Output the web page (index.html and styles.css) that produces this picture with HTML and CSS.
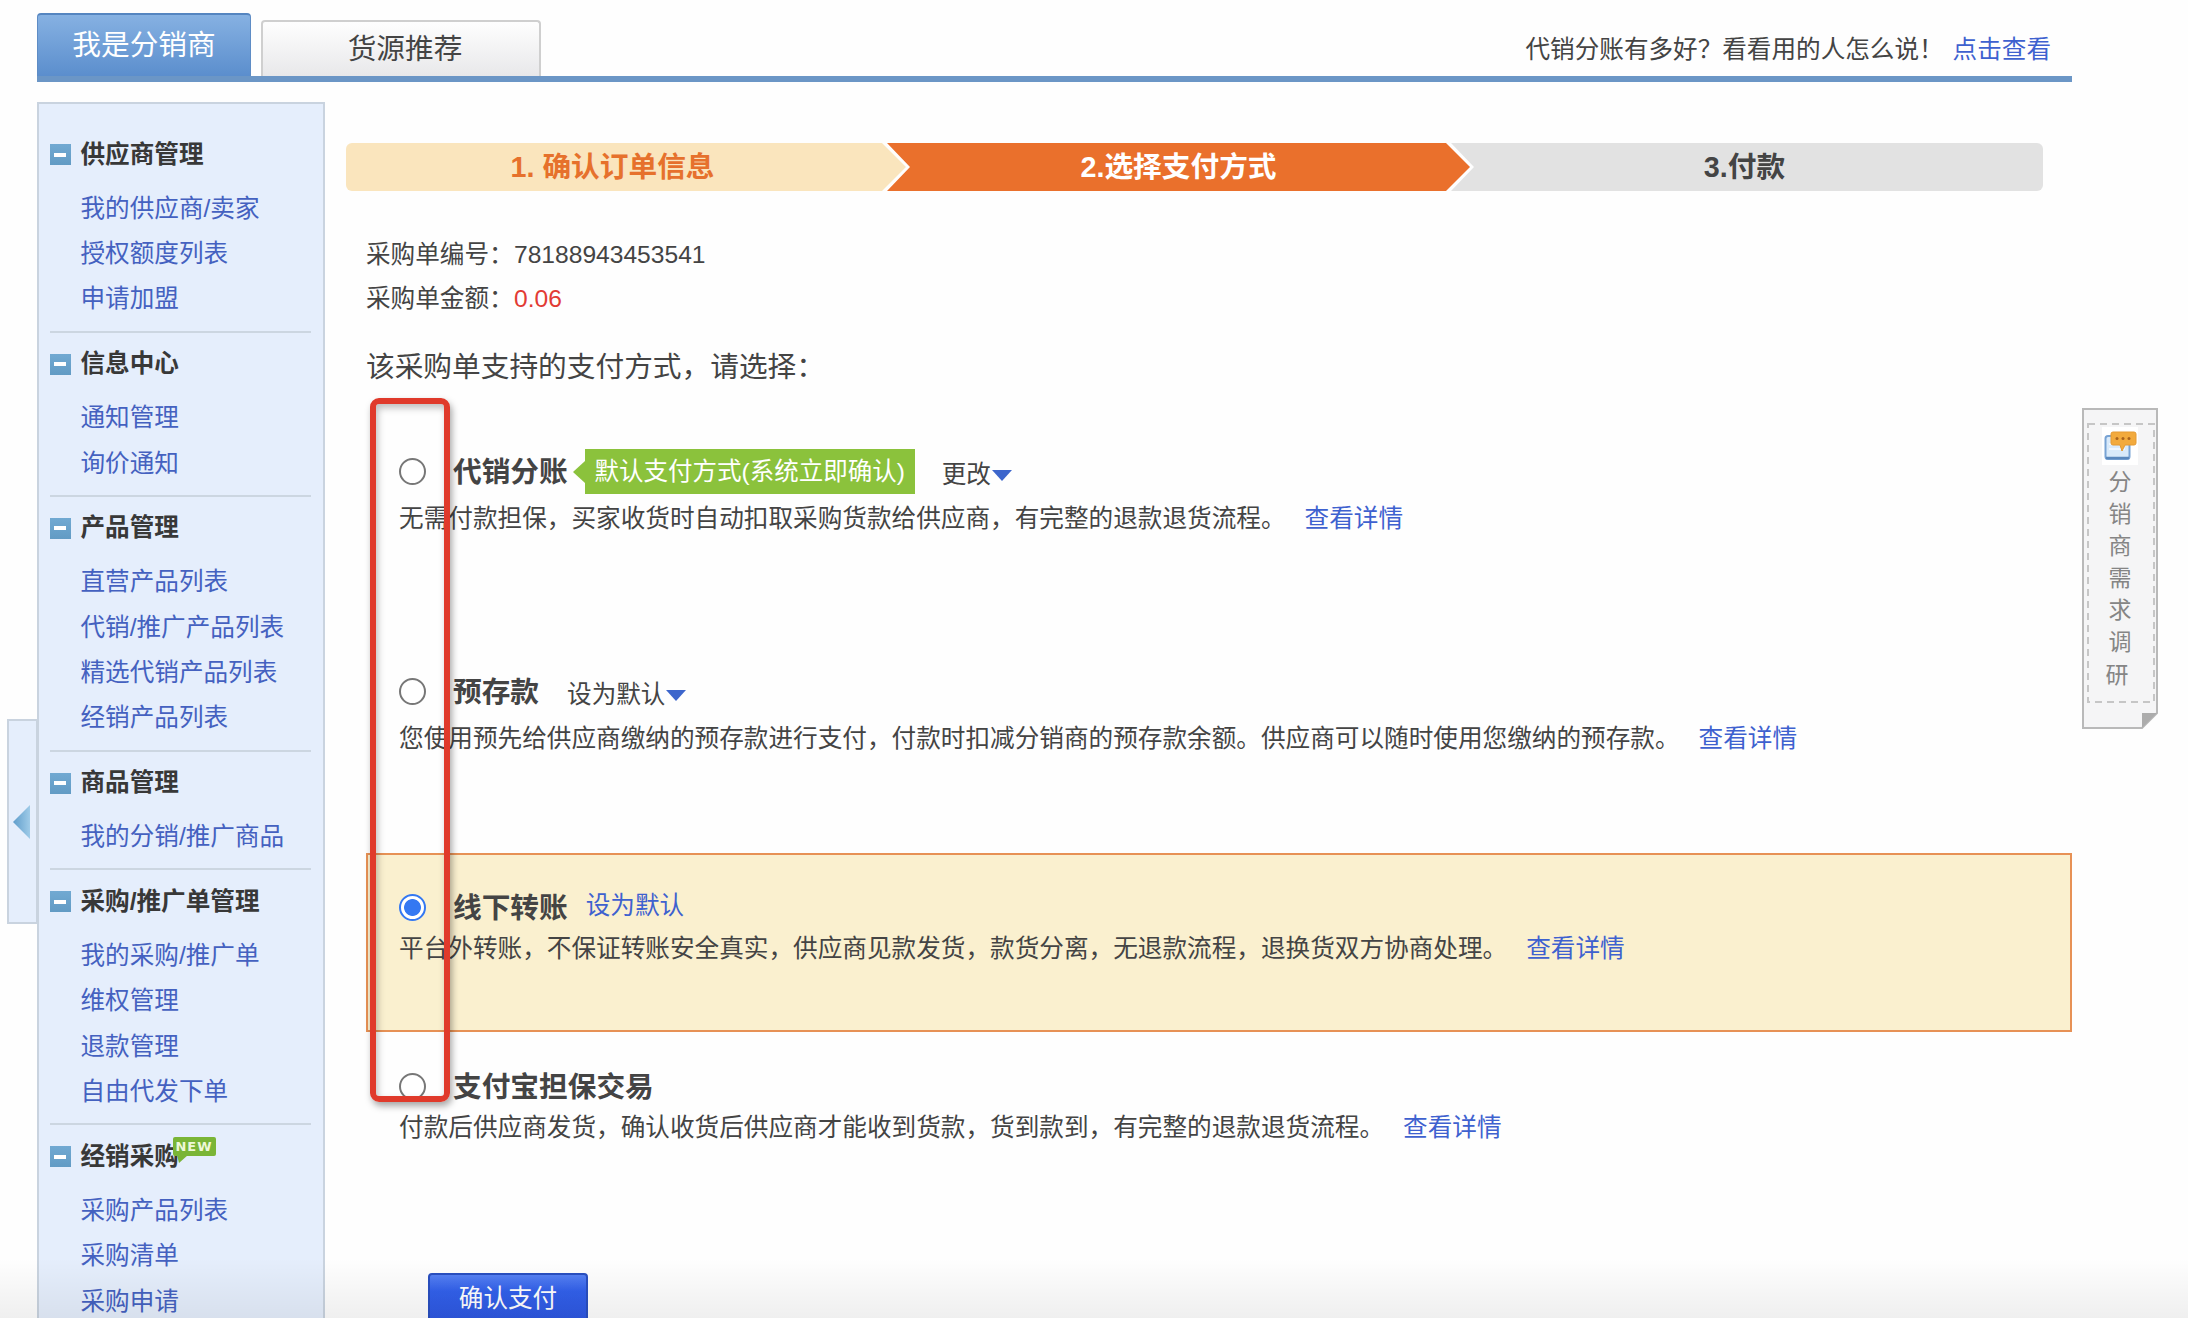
FILE: index.html
```html
<!DOCTYPE html>
<html lang="zh-CN">
<head>
<meta charset="utf-8">
<title>选择支付方式</title>
<link rel="stylesheet" href="styles.css">
</head>
<body>
<header class="topbar">
  <a class="tab tab-active">我是分销商</a>
  <a class="tab tab-plain">货源推荐</a>
  <p class="promo">代销分账有多好？看看用的人怎么说！<a class="link">点击查看</a></p>
</header>
<div class="layout">
  <nav class="sidebar">
    <section class="group">
      <h3 class="group-title"><i class="minus"></i>供应商管理</h3>
      <a class="item">我的供应商/卖家</a><a class="item">授权额度列表</a><a class="item">申请加盟</a>
    </section>
    <section class="group">
      <h3 class="group-title"><i class="minus"></i>信息中心</h3>
      <a class="item">通知管理</a><a class="item">询价通知</a>
    </section>
    <section class="group">
      <h3 class="group-title"><i class="minus"></i>产品管理</h3>
      <a class="item">直营产品列表</a><a class="item">代销/推广产品列表</a><a class="item">精选代销产品列表</a><a class="item">经销产品列表</a>
    </section>
    <section class="group">
      <h3 class="group-title"><i class="minus"></i>商品管理</h3>
      <a class="item">我的分销/推广商品</a>
    </section>
    <section class="group">
      <h3 class="group-title"><i class="minus"></i>采购/推广单管理</h3>
      <a class="item">我的采购/推广单</a><a class="item">维权管理</a><a class="item">退款管理</a><a class="item">自由代发下单</a>
    </section>
    <section class="group">
      <h3 class="group-title"><i class="minus"></i>经销采购<span class="new">NEW</span></h3>
      <a class="item">采购产品列表</a><a class="item">采购清单</a><a class="item">采购申请</a>
    </section>
  </nav>
  <main class="main">
    <ol class="steps">
      <li class="step step-done">1. 确认订单信息</li>
      <li class="step step-current">2.选择支付方式</li>
      <li class="step step-next">3.付款</li>
    </ol>
    <div class="order">
      <p class="line"><span class="label">采购单编号：</span>78188943453541</p>
      <p class="line"><span class="label">采购单金额：</span><span class="amount">0.06</span></p>
      <p class="prompt">该采购单支持的支付方式，请选择：</p>
    </div>
    <form class="options">
      <section class="option option-first">
        <div class="head"><i class="radio"></i><b class="name">代销分账</b><span class="flag">默认支付方式(系统立即确认)</span><a class="change">更改<i class="caret"></i></a></div>
        <p class="desc">无需付款担保，买家收货时自动扣取采购货款给供应商，有完整的退款退货流程。<a class="link">查看详情</a></p>
      </section>
      <section class="option option-second">
        <div class="head"><i class="radio"></i><b class="name">预存款</b><a class="change change-near">设为默认<i class="caret"></i></a></div>
        <p class="desc">您使用预先给供应商缴纳的预存款进行支付，付款时扣减分销商的预存款余额。供应商可以随时使用您缴纳的预存款。<a class="link">查看详情</a></p>
      </section>
      <section class="option option-selected">
        <div class="head"><i class="radio radio-on"></i><b class="name">线下转账</b><a class="set-default">设为默认</a></div>
        <p class="desc">平台外转账，不保证转账安全真实，供应商见款发货，款货分离，无退款流程，退换货双方协商处理。<a class="link">查看详情</a></p>
      </section>
      <section class="option option-last">
        <div class="head"><i class="radio"></i><b class="name">支付宝担保交易</b></div>
        <p class="desc">付款后供应商发货，确认收货后供应商才能收到货款，货到款到，有完整的退款退货流程。<a class="link">查看详情</a></p>
      </section>
      <a class="pay">确认支付</a>
    </form>
  </main>
</div>
<div class="handle"><svg width="17" height="34" viewBox="0 0 17 34"><defs><linearGradient id="hg"><stop offset="0" stop-color="#5f9dcb"/><stop offset="1" stop-color="#9fcbe8"/></linearGradient></defs><path d="M0 17 17 0V34Z" fill="url(#hg)"/></svg></div>
<aside class="survey">
  <svg class="paper" width="76" height="321" viewBox="0 0 76 321" fill="none"><path d="M1 1H75V305L60 320H1Z" fill="#f5f5f6" stroke="#b9b9b9" stroke-width="2"/><path d="M60 305H75L60 320Z" fill="#acacac"/><rect x="6" y="16" width="66" height="278" stroke="#c6c6c6" stroke-width="2" stroke-dasharray="7 5"/></svg>
  <svg class="survey-icon" width="36" height="38" viewBox="0 0 36 38"><path fill="#fff" d="M0 0h36v38H0z"/><rect x="3.500" y="9" width="24" height="23" rx="2.500" fill="#d9eafa" stroke="#78a3d4" stroke-width="2"/><path d="M4 31H27" stroke="#5a88bd" stroke-width="2.500"/><path d="M7 17H23M7 22H23" stroke="#eff7ff" stroke-width="2"/><path d="M11 5H32Q34 5 34 7V16Q34 18 32 18H23L20 24L18 18H11Q9 18 9 16V7Q9 5 11 5Z" fill="#f2aa3d" stroke="#e59a32"/><g fill="#a9631c"><circle cx="15" cy="11.500" r="1.500"/><circle cx="21" cy="11.500" r="1.500"/><circle cx="27" cy="11.500" r="1.500"/></g></svg>
  <span>分</span><span>销</span><span>商</span><span>需</span><span>求</span><span>调</span><span class="shift">研</span>
</aside>
<div class="marker"></div>
<div class="shade"></div>
</body>
</html>
```
FILE: styles.css
```css
* { box-sizing: border-box; }
html { overflow: hidden; }
body {
  position: relative;
  margin: 0;
  height: 1318px;
  overflow: hidden;
  background: #fefefe;
  color: #444;
  font: 24.6px/44px "Liberation Sans", "Noto Sans CJK SC", sans-serif;
}
p, h3, ol { margin: 0; padding: 0; }
a, p, h3, li, b, span { white-space: nowrap; }
i { display: block; flex: none; }
.link { color: #3e61cf; }

.topbar {
  display: flex;
  align-items: flex-end;
  margin-left: 37px;
  width: 2035px;
  height: 82px;
  border-bottom: 6px solid #6b96c6;
}
.tab { font-size: 28.7px; text-align: center; }
.tab-active {
  width: 214px;
  height: 63px;
  line-height: 61px;
  color: #fff;
  border: 1px solid #5e8cc5;
  border-top: 2px solid #5585c0;
  border-bottom: 0;
  border-radius: 4px 4px 0 0;
  background: linear-gradient(#86b1e2, #5b8ecd);
}
.tab-plain {
  width: 280px;
  height: 56px;
  margin-left: 10px;
  padding-left: 8px;
  line-height: 55px;
  border: 2px solid #cfcfcf;
  border-bottom: 0;
  border-radius: 4px 4px 0 0;
  background: linear-gradient(#fefefe, #e8e8ea);
}
.promo { margin: 0 21px 4px auto; }
.promo .link { margin-left: 9px; }

.layout { display: flex; align-items: flex-start; margin-left: 37px; width: 2035px; }
.sidebar {
  flex: none;
  width: 288px;
  height: 1230px;
  margin-top: 20px;
  padding: 19px 12px 0 10.500px;
  border: 2px solid #c9d3df;
  background: #e5eefc;
}
.group {
  padding: 9px 0 8.700px;
  border-bottom: 2px solid #ccd6e1;
}
.group-title {
  display: flex;
  align-items: center;
  position: relative;
  height: 45px;
  margin-bottom: 8.600px;
  color: #383838;
  font-size: 24.600px;
}
.minus {
  width: 21px;
  height: 21px;
  margin-right: 10px;
  background: linear-gradient(#fff, #fff) 50% 50% / 12px 4px no-repeat, linear-gradient(#71a9d2, #629bc4);
}
.item { display: block; padding-left: 31px; color: #4461c0; line-height: 45.400px; }
.new {
  position: absolute;
  left: 123px;
  top: 3px;
  width: 43px;
  height: 19px;
  border-radius: 2px;
  background: #7ab536;
  color: #eef8d8;
  font: bold 13px/19px "DejaVu Sans", sans-serif;
  text-align: center;
  letter-spacing: 1px;
}
.new::after {
  content: "";
  position: absolute;
  left: 4px;
  top: 18px;
  border: solid transparent;
  border-width: 8px 9px 0 2px;
  border-top-color: #7ab536;
}

.main { flex: 1; padding: 61px 0 0 21px; }
.steps { display: flex; width: 1697px; height: 48px; list-style: none; }
.step { font-weight: bold; font-size: 28.7px; line-height: 49px; text-align: center; }
.step-done {
  width: 560px;
  padding-right: 27px;
  color: #e6712c;
  border-radius: 6px 0 0 6px;
  background: #fae5bd;
  clip-path: polygon(0 0, 536px 0, 560px 50%, 536px 100%, 0 100%);
}
.step-current {
  width: 583px;
  margin-left: -19px;
  color: #fff;
  background: #ea702c;
  clip-path: polygon(0 0, 559px 0, 583px 50%, 559px 100%, 0 100%, 23px 50%);
}
.step-next {
  flex: 1;
  margin-left: -19px;
  padding-right: 5px;
  color: #444;
  border-radius: 0 6px 6px 0;
  background: #e2e2e2;
  clip-path: polygon(0 0, 100% 0, 100% 100%, 0 100%, 23px 50%);
}
.order { padding: 42px 0 0 20px; }
.line { display: flex; }
.label { width: 148px; }
.amount { color: #e23b34; }
.prompt { margin-top: 24px; font-size: 28.7px; }

.options { margin-left: 20px; }
.option { padding-left: 33px; border: 0 solid #e79155; }
.option-first { height: 220px; padding-top: 57px; }
.option-second { height: 244px; padding-top: 57px; }
.option-selected { height: 179px; padding: 33px 0 0 31px; border-width: 2px; background: #faf0cf; }
.option-last { height: 241px; padding-top: 35px; }
.head { display: flex; align-items: center; height: 39px; }
.option-first .head, .option-second .head { height: 51px; }
.radio {
  width: 27px;
  height: 27px;
  margin-right: 27px;
  border: 2px solid #777;
  border-radius: 50%;
  background: #fff;
}
.radio-on {
  border-color: #3478f2;
  background: radial-gradient(circle, #3478f2 8px, #fff 8.800px);
}
.name { font-size: 28.7px; }
.flag {
  position: relative;
  height: 45px;
  margin-left: 17px;
  width: 330px;
  color: #fff;
  font-size: 24.500px;
  text-align: center;
  line-height: 46px;
  background: #8bc23c;
}
.flag::before {
  content: "";
  position: absolute;
  left: -12px;
  top: 12px;
  border: solid transparent;
  border-width: 11px 12px 11px 0;
  border-right-color: #8bc23c;
}
.change { display: flex; align-items: center; margin: 7px 0 0 27px; }
.change-near { margin-left: 28px; }
.caret { border: solid transparent; border-width: 11px 10px 0; border-top-color: #3d66cc; margin-left: 1px; }
.set-default { margin: -4px 0 0 18px; color: #3e61cf; }
.desc { font-size: 24.630px; }
.desc .link { margin-left: 19px; }
.pay {
  display: block;
  width: 160px;
  height: 50px;
  margin-left: 62px;
  color: #fff;
  line-height: 48px;
  text-align: center;
  border: 2px solid #294fc0;
  border-radius: 4px;
  background: linear-gradient(#5580f2, #3260ea 35%, #2d56e0);
}

.handle {
  position: absolute;
  left: 7px;
  top: 719px;
  width: 31px;
  height: 205px;
  padding: 84px 0 0 4px;
  border: 2px solid #c9d3df;
  background: #e5eefc;
}
.handle svg { display: block; }
.survey {
  position: absolute;
  left: 2082px;
  top: 408px;
  width: 76px;
  height: 321px;
  padding-top: 19px;
  display: flex;
  flex-direction: column;
  align-items: center;
  color: #858585;
  font-size: 23px;
  line-height: 32.100px;
}
.survey span { position: relative; }
.paper { position: absolute; left: 0; top: 0; }
.survey-icon { position: relative; flex: none; margin-bottom: 1px; }
.survey .shift { margin-right: 6px; }
.marker {
  position: absolute;
  left: 370px;
  top: 398px;
  width: 80px;
  height: 704px;
  border: 6px solid #e03a2b;
  border-radius: 9px;
  box-shadow: 2px 4px 7px rgba(0, 0, 0, .35), inset 2px 4px 7px rgba(0, 0, 0, .25);
}
.shade {
  position: absolute;
  left: 0;
  right: 0;
  bottom: 0;
  height: 60px;
  background: linear-gradient(rgba(0, 0, 0, 0), rgba(0, 0, 0, .06));
}
```
